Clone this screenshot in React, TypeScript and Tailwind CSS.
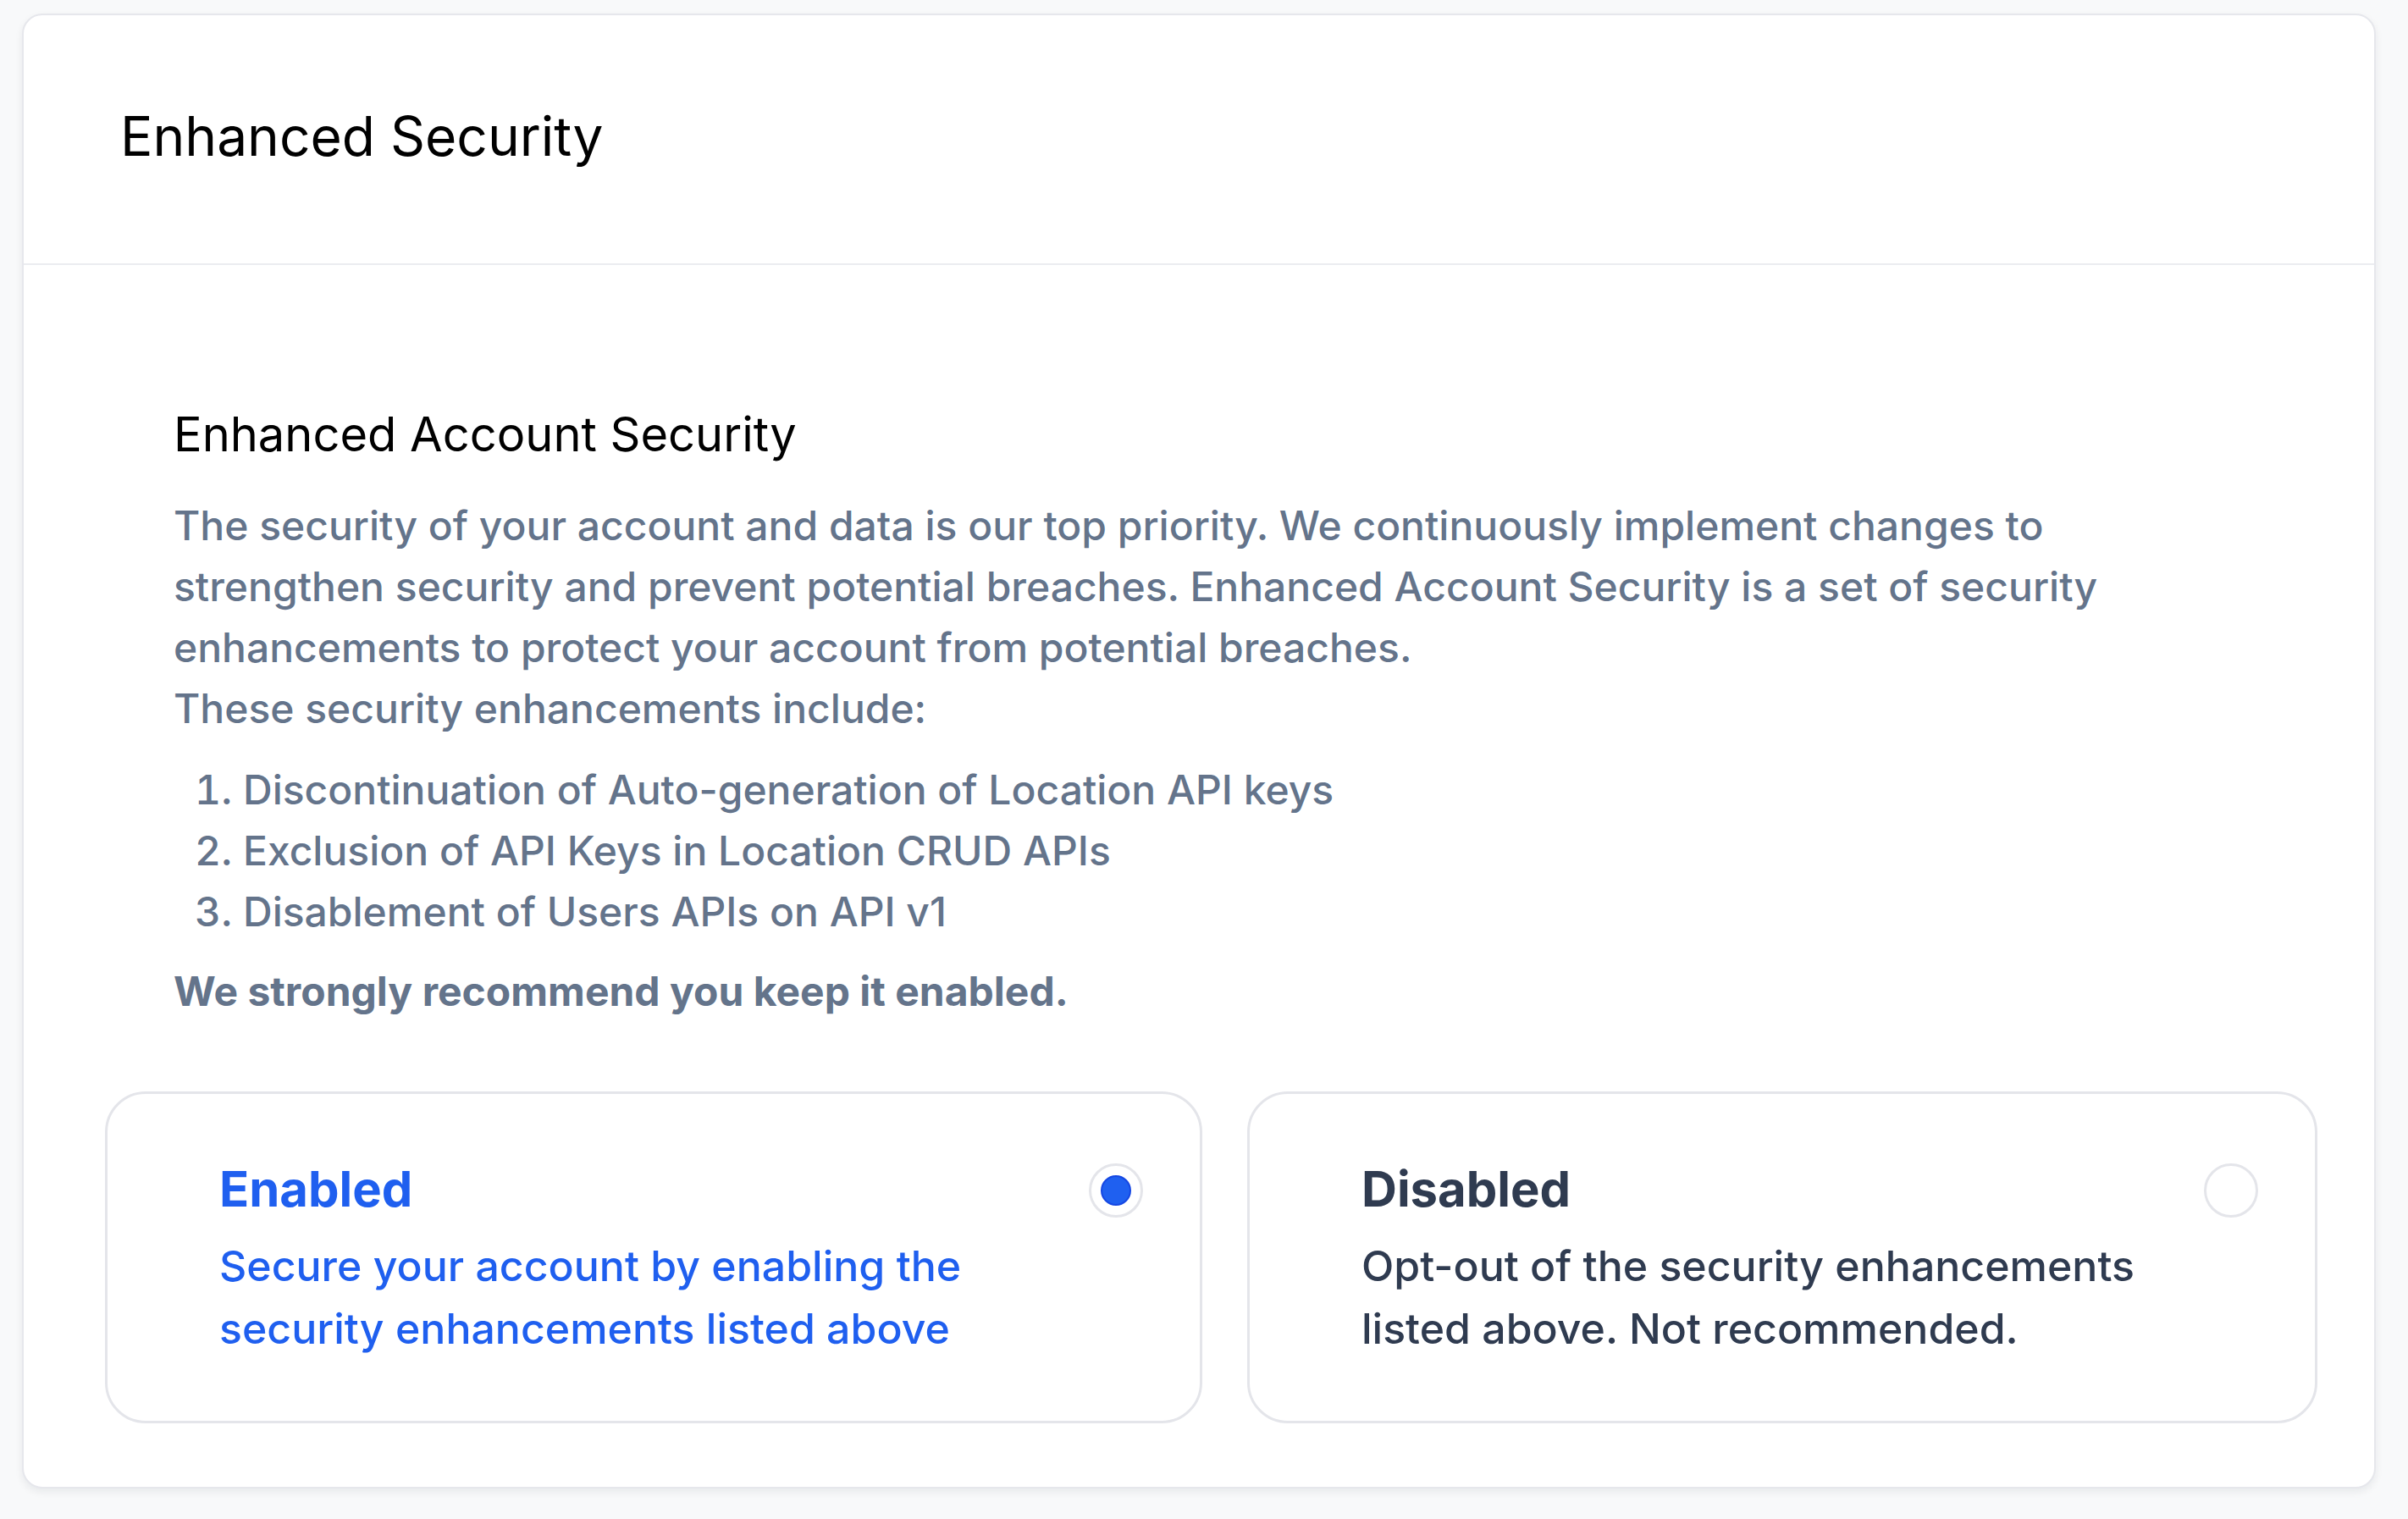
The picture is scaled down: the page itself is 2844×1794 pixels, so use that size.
import React, { useState } from 'react';

type Choice = 'enabled' | 'disabled';

const OPTIONS: { id: Choice; title: string; text: string; width: string }[] = [
  {
    id: 'enabled',
    title: 'Enabled',
    text: 'Secure your account by enabling the security enhancements listed above',
    width: 'w-[1296px]',
  },
  {
    id: 'disabled',
    title: 'Disabled',
    text: 'Opt-out of the security enhancements listed above. Not recommended.',
    width: 'w-[1264px]',
  },
];

const ITEMS = [
  'Discontinuation of Auto-generation of Location API keys',
  'Exclusion of API Keys in Location CRUD APIs',
  'Disablement of Users APIs on API v1',
];

const Radio: React.FC<{ checked: boolean }> = ({ checked }) => (
  <span className="mt-[6px] flex h-[64px] w-[64px] shrink-0 items-center justify-center rounded-full border-[3px] border-[#e4e5ea] bg-white">
    {checked && <span className="h-[36px] w-[36px] rounded-full border-2 border-[#1547e3] bg-[#1f60f0]" />}
  </span>
);

export default function App() {
  const [choice, setChoice] = useState<Choice>('enabled');

  return (
    <div className="min-h-screen w-full bg-[#f8f9fa] pl-[26px] pt-[16px] font-['Inter',sans-serif]">
      <div className="h-[1742px] w-[2780px] overflow-hidden rounded-[24px] border-2 border-[#e6e7ec] bg-white shadow-[0_4px_10px_rgba(15,23,42,0.07)]">
        {/* Header */}
        <div className="flex h-[295px] items-center border-b-2 border-[#ebecf0] pb-[8px] pl-[114px]">
          <h1 className="text-[64px] leading-none text-black">Enhanced Security</h1>
        </div>

        {/* Body */}
        <div className="pl-[96px] pt-[164px]">
          <div className="pl-[81px]">
            <h2 className="text-[56px] leading-[72px] text-black">Enhanced Account Security</h2>
            <p className="mt-[36px] w-[2330px] text-[48px] font-medium leading-[72px] text-[#64748b]">
              The security of your account and data is our top priority. We continuously implement changes to
              strengthen security and prevent potential breaches. Enhanced Account Security is a set of security
              enhancements to protect your account from potential breaches.
              <br />
              These security enhancements include:
            </p>
            <ol className="mt-[24px] list-decimal pl-[82px] text-[48px] font-medium leading-[72px] text-[#64748b]">
              {ITEMS.map(item => (
                <li key={item}>{item}</li>
              ))}
            </ol>
            <p className="mt-[22px] text-[48px] font-bold leading-[72px] text-[#64748b]">
              We strongly recommend you keep it enabled.
            </p>
          </div>

          {/* Options */}
          <div className="mt-[82px] flex gap-[53px]">
            {OPTIONS.map(opt => {
              const active = choice === opt.id;
              return (
                <button
                  key={opt.id}
                  type="button"
                  onClick={() => setChoice(opt.id)}
                  className={`flex h-[392px] ${opt.width} items-start gap-[40px] rounded-[48px] border-[3px] border-[#e4e5ea] bg-white pl-[132px] pr-[67px] pt-[76px] text-left`}
                >
                  <div className="flex-1">
                    <div className={`text-[58px] font-bold leading-[72px] ${active ? 'text-[#1f5fef]' : 'text-[#2f3b50]'}`}>
                      {opt.title}
                    </div>
                    <div className={`mt-[18px] text-[50px] font-medium leading-[74px] ${active ? 'text-[#1f5fef]' : 'text-[#2f3b50]'}`}>
                      {opt.text}
                    </div>
                  </div>
                  <Radio checked={active} />
                </button>
              );
            })}
          </div>
        </div>
      </div>
    </div>
  );
}
